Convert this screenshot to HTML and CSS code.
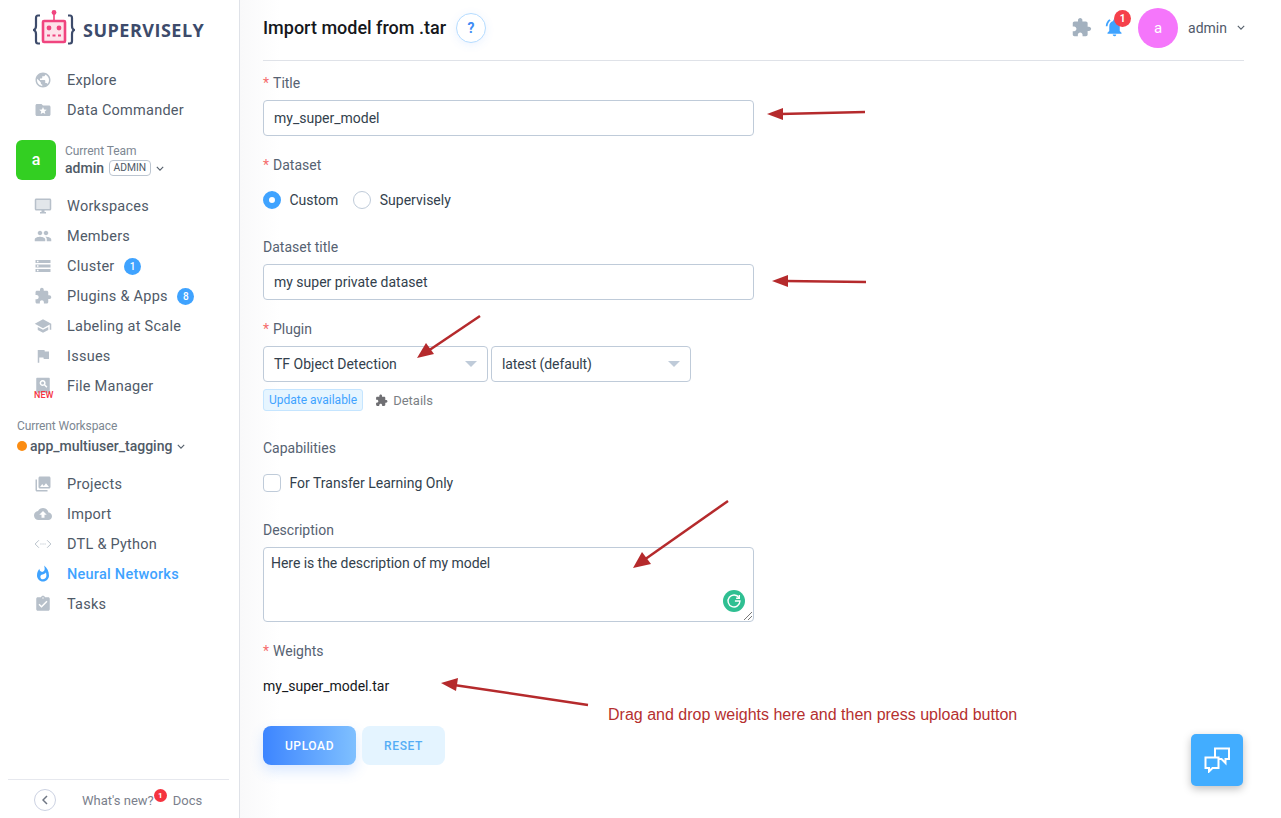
FILE: index.html
```html
<!DOCTYPE html>
<html lang="en">
<head>
    <meta charset="UTF-8">
    <meta name="viewport" content="width=device-width, initial-scale=1.0">
    <title>Import model from .tar</title>
    <link rel="stylesheet" href="styles.css">
</head>
<body>

<div class="app">
    <aside class="sidebar">
        <div class="logo">
            <svg class="logo-mark" viewBox="0 0 42 36">
                <path d="M7 5.500H5Q3 5.500 3 8V16Q3 19 .800 20Q3 21 3 24V31Q3 33.500 5 33.500H7" fill="none" stroke="#3d4b6b" stroke-width="2.200"/>
                <path d="M35 5.500H37Q39 5.500 39 8V16Q39 19 41.200 20Q39 21 39 24V31Q39 33.500 37 33.500H35" fill="none" stroke="#3d4b6b" stroke-width="2.200"/>
                <circle cx="21" cy="2.500" r="2.400" fill="#f0457f"/>
                <path d="M21 3V10" stroke="#f0457f" stroke-width="1.600"/>
                <rect x="10" y="11" width="22" height="21" rx="1" fill="#fde3ea" stroke="#f0457f" stroke-width="2.600"/>
                <circle cx="16" cy="18" r="2.400" fill="#f0457f"/>
                <circle cx="26" cy="18" r="2.400" fill="#f0457f"/>
                <path d="M14 25.500H28" stroke="#f0457f" stroke-width="1.800" stroke-dasharray="3 2.500"/>
            </svg>
            <span class="logo-text">SUPERVISELY</span>
        </div>

        <nav class="nav">
            <a class="nav-item"><svg class="nav-icon" viewBox="0 0 24 24"><path d="M12 2C6.480 2 2 6.480 2 12s4.480 10 10 10 10-4.480 10-10S17.520 2 12 2zm-1 17.930c-3.950-.490-7-3.850-7-7.930 0-.620.080-1.210.210-1.790L9 15v1c0 1.100.900 2 2 2v1.930zm6.900-2.540c-.260-.810-1-1.390-1.900-1.390h-1v-3c0-.550-.450-1-1-1H8v-2h2c.550 0 1-.450 1-1V7h2c1.100 0 2-.900 2-2v-.410c2.930 1.190 5 4.060 5 7.410 0 2.080-.800 3.970-2.100 5.390z"/></svg>Explore</a>
            <a class="nav-item"><svg class="nav-icon" viewBox="0 0 24 24"><path fill-rule="evenodd" d="M20 6h-8l-2-2H4c-1.100 0-2 .900-2 2v12c0 1.100.900 2 2 2h16c1.100 0 2-.900 2-2V8c0-1.100-.900-2-2-2zM12 8l1.400 3.300 3.600.300-2.700 2.300.800 3.500L12 15.600l-3.100 1.800.800-3.500L7 11.600l3.600-.300z"/></svg>Data Commander</a>
        </nav>

        <div class="team">
            <div class="team-avatar">a</div>
            <div class="team-info">
                <div class="team-caption">Current Team</div>
                <div class="team-name">admin <span class="role">ADMIN</span>
                    <svg class="chevron" viewBox="0 0 10 6"><path d="M1 1l4 4 4-4"/></svg>
                </div>
            </div>
        </div>

        <nav class="nav nav-team">
            <a class="nav-item"><svg class="nav-icon" viewBox="0 0 24 24"><rect x="2" y="3" width="20" height="14" opacity=".4"/><path d="M21 2H3c-1.100 0-2 .900-2 2v12c0 1.100.900 2 2 2h7v2H8v2h8v-2h-2v-2h7c1.100 0 2-.900 2-2V4c0-1.100-.900-2-2-2zm0 14H3V4h18v12z"/></svg>Workspaces</a>
            <a class="nav-item"><svg class="nav-icon" viewBox="0 0 24 24"><path d="M16 11c1.660 0 2.990-1.340 2.990-3S17.660 5 16 5c-1.660 0-3 1.340-3 3s1.340 3 3 3zm-8 0c1.660 0 2.990-1.340 2.990-3S9.660 5 8 5C6.340 5 5 6.340 5 8s1.340 3 3 3zm0 2c-2.330 0-7 1.170-7 3.500V19h14v-2.500c0-2.330-4.670-3.500-7-3.500zm8 0c-.290 0-.620.020-.970.050 1.160.840 1.970 1.970 1.970 3.450V19h6v-2.500c0-2.330-4.670-3.500-7-3.500z"/></svg>Members</a>
            <a class="nav-item"><svg class="nav-icon" viewBox="0 0 24 24"><path d="M2 20h20v-4H2v4zm2-3h2v2H4v-2zM2 4v4h20V4H2zm4 3H4V5h2v2zm-4 7h20v-4H2v4zm2-3h2v2H4v-2z"/></svg>Cluster<span class="count">1</span></a>
            <a class="nav-item"><svg class="nav-icon" viewBox="0 0 24 24"><path d="M20.500 11H19V7c0-1.100-.900-2-2-2h-4V3.500C13 2.120 11.880 1 10.500 1S8 2.120 8 3.500V5H4c-1.100 0-1.990.900-1.990 2v3.800H3.500c1.490 0 2.700 1.210 2.700 2.700s-1.210 2.700-2.700 2.700H2V20c0 1.100.900 2 2 2h3.800v-1.500c0-1.490 1.210-2.700 2.700-2.700 1.490 0 2.700 1.210 2.700 2.700V22H17c1.100 0 2-.900 2-2v-4h1.500c1.380 0 2.500-1.120 2.500-2.500S21.880 11 20.500 11z"/></svg>Plugins &amp; Apps<span class="count">8</span></a>
            <a class="nav-item"><svg class="nav-icon" viewBox="0 0 24 24"><path d="M5 13.180v4L12 21l7-3.820v-4L12 17l-7-3.820zM12 3L1 9l11 6 9-4.910V17h2V9L12 3z"/></svg>Labeling at Scale</a>
            <a class="nav-item"><svg class="nav-icon" viewBox="0 0 24 24"><path d="M14.400 6L14 4H5v17h2v-7h5.600l.400 2h7V6z"/></svg>Issues</a>
            <a class="nav-item"><span class="file-icon"><svg class="nav-icon" viewBox="0 0 24 24"><path fill-rule="evenodd" d="M4 1h16c.600 0 1 .400 1 1v18c0 .600-.400 1-1 1H4c-.600 0-1-.400-1-1V2c0-.600.400-1 1-1zm7.500 3a4 4 0 1 0 2.100 7.400l2.900 2.900 1.400-1.400-2.900-2.900A4 4 0 0 0 11.500 4zm0 2a2 2 0 1 1 0 4 2 2 0 0 1 0-4z"/></svg><span class="new-tag">NEW</span></span>File Manager</a>
        </nav>

        <div class="workspace">
            <div class="workspace-caption">Current Workspace</div>
            <div class="workspace-name"><span class="dot"></span>app_multiuser_tagging
                <svg class="chevron" viewBox="0 0 10 6"><path d="M1 1l4 4 4-4"/></svg>
            </div>
        </div>

        <nav class="nav">
            <a class="nav-item"><svg class="nav-icon" viewBox="0 0 24 24"><path d="M22 16V4c0-1.100-.900-2-2-2H8c-1.100 0-2 .900-2 2v12c0 1.100.900 2 2 2h12c1.100 0 2-.900 2-2zm-11-4l2.030 2.710L16 11l4 5H8l3-4zM2 6v14c0 1.100.900 2 2 2h14v-2H4V6H2z"/></svg>Projects</a>
            <a class="nav-item"><svg class="nav-icon" viewBox="0 0 24 24"><path d="M19.350 10.040C18.670 6.590 15.640 4 12 4 9.110 4 6.600 5.640 5.350 8.040 2.340 8.360 0 10.910 0 14c0 3.310 2.690 6 6 6h13c2.760 0 5-2.240 5-5 0-2.640-2.050-4.780-4.650-4.960zM14 13v4h-4v-4H7l5-5 5 5h-3z"/></svg>Import</a>
            <a class="nav-item"><svg class="nav-icon nav-icon-line" viewBox="0 0 24 24"><path d="M6.500 7L1.500 12l5 5M17.500 7l5 5-5 5"/><path class="dots" d="M8.500 12h7"/></svg>DTL &amp; Python</a>
            <a class="nav-item active"><svg class="nav-icon" viewBox="0 0 24 24"><path d="M13.500.670s.740 2.650.740 4.800c0 2.060-1.350 3.730-3.410 3.730-2.070 0-3.630-1.670-3.630-3.730l.030-.360C5.210 7.510 4 10.620 4 14c0 4.420 3.580 8 8 8s8-3.580 8-8C20 8.610 17.410 3.800 13.500.670zM11.710 19c-1.780 0-3.220-1.400-3.220-3.140 0-1.620 1.050-2.760 2.810-3.120 1.770-.360 3.600-1.210 4.620-2.580.390 1.290.590 2.650.590 4.040 0 2.650-2.150 4.800-4.800 4.800z"/></svg>Neural Networks</a>
            <a class="nav-item"><svg class="nav-icon" viewBox="0 0 24 24"><path d="M19 3h-4.180C14.400 1.840 13.300 1 12 1c-1.300 0-2.400.840-2.820 2H5c-1.100 0-2 .900-2 2v14c0 1.100.900 2 2 2h14c1.100 0 2-.900 2-2V5c0-1.100-.900-2-2-2zm-7 0c.550 0 1 .450 1 1s-.450 1-1 1-1-.450-1-1 .450-1 1-1zm-2 14l-4-4 1.410-1.410L10 14.170l6.590-6.590L18 9l-8 8z"/></svg>Tasks</a>
        </nav>

        <div class="sidebar-footer">
            <span class="collapse"><svg viewBox="0 0 6 10"><path d="M5 1L1 5l4 4"/></svg></span>
            <a class="whats-new">What's new?<span class="mini-badge">1</span></a>
            <a class="docs">Docs</a>
        </div>
    </aside>

    <main class="main">
        <header class="topbar">
            <h1>Import model from .tar</h1>
            <span class="help">?</span>
            <div class="topbar-right">
                <svg class="top-puzzle" viewBox="0 0 24 24"><path d="M20.500 11H19V7c0-1.100-.900-2-2-2h-4V3.500C13 2.120 11.880 1 10.500 1S8 2.120 8 3.500V5H4c-1.100 0-1.990.900-1.990 2v3.800H3.500c1.490 0 2.700 1.210 2.700 2.700s-1.210 2.700-2.700 2.700H2V20c0 1.100.900 2 2 2h3.800v-1.500c0-1.490 1.210-2.700 2.700-2.700 1.490 0 2.700 1.210 2.700 2.700V22H17c1.100 0 2-.900 2-2v-4h1.500c1.380 0 2.500-1.120 2.500-2.500S21.880 11 20.500 11z"/></svg>
                <span class="bell">
                    <svg viewBox="0 0 24 24"><path d="M7.580 4.080L6.150 2.650C3.750 4.480 2.170 7.300 2.030 10.500h2c.150-2.650 1.510-4.970 3.550-6.420zm12.390 6.420h2c-.150-3.200-1.730-6.020-4.120-7.850l-1.420 1.430c2.020 1.450 3.390 3.770 3.540 6.420zM18 11c0-3.070-1.640-5.640-4.500-6.320V4c0-.830-.670-1.500-1.500-1.500s-1.500.670-1.500 1.500v.680C7.630 5.360 6 7.920 6 11v5l-2 2v1h16v-1l-2-2v-5zm-6 11c.140 0 .270-.010.400-.040.650-.140 1.180-.580 1.440-1.180.100-.240.150-.500.150-.780h-4c.010 1.100.900 2 2.010 2z"/></svg>
                    <span class="bell-badge">1</span>
                </span>
                <span class="user-avatar">a</span>
                <span class="user-name">admin</span>
                <svg class="chevron" viewBox="0 0 10 6"><path d="M1 1l4 4 4-4"/></svg>
            </div>
        </header>

        <form class="form">
            <div class="field">
                <label class="label required">Title</label>
                <div class="input">my_super_model</div>
            </div>
            <div class="field">
                <label class="label required">Dataset</label>
                <div class="choice-row">
                    <span class="radio checked"></span><span class="choice-text">Custom</span>
                    <span class="radio"></span><span class="choice-text">Supervisely</span>
                </div>
            </div>
            <div class="field">
                <label class="label">Dataset title</label>
                <div class="input">my super private dataset</div>
            </div>
            <div class="field">
                <label class="label required">Plugin</label>
                <div class="select-row">
                    <div class="select select-plugin">TF Object Detection<span class="caret"></span></div>
                    <div class="select select-version">latest (default)<span class="caret"></span></div>
                </div>
                <div class="plugin-meta">
                    <span class="tag">Update available</span>
                    <svg class="details-icon" viewBox="0 0 24 24"><path d="M20.500 11H19V7c0-1.100-.900-2-2-2h-4V3.500C13 2.120 11.880 1 10.500 1S8 2.120 8 3.500V5H4c-1.100 0-1.990.900-1.990 2v3.800H3.500c1.490 0 2.700 1.210 2.700 2.700s-1.210 2.700-2.700 2.700H2V20c0 1.100.900 2 2 2h3.800v-1.500c0-1.490 1.210-2.700 2.700-2.700 1.490 0 2.700 1.210 2.700 2.700V22H17c1.100 0 2-.900 2-2v-4h1.500c1.380 0 2.500-1.120 2.500-2.500S21.880 11 20.500 11z"/></svg>
                    <span class="details">Details</span>
                </div>
            </div>
            <div class="field field-capabilities">
                <label class="label">Capabilities</label>
                <div class="choice-row">
                    <span class="checkbox"></span><span class="choice-text">For Transfer Learning Only</span>
                </div>
            </div>
            <div class="field">
                <label class="label">Description</label>
                <div class="textarea">Here is the description of my model
                    <span class="grammarly"><svg viewBox="0 0 24 24"><path d="M17.500 8.500A6.500 6.500 0 1 0 18.500 12H13"/><path d="M17.800 5.500v3.500h-3.500"/></svg></span>
                    <svg class="resize-grip" viewBox="0 0 8 8"><path d="M0 8L8 0M4 8l4-4"/></svg>
                </div>
            </div>
            <div class="field">
                <label class="label required">Weights</label>
                <div class="file-name">my_super_model.tar</div>
            </div>
            <div class="actions">
                <button type="button" class="btn btn-upload">UPLOAD</button>
                <button type="button" class="btn btn-reset">RESET</button>
            </div>
        </form>
    </main>
</div>

<!-- annotations drawn on top of the screenshot -->
<svg class="annotations" viewBox="0 0 1281 818">
    <g class="arrow-line">
        <path d="M865 112L780 114"/>
        <path d="M866 282L785 281"/>
        <path d="M480 316L428 351"/>
        <path d="M728 501L644 560"/>
        <path d="M588 705L454 685"/>
    </g>
    <g class="arrow-head">
        <path d="M767 114L783 108L783 120Z"/>
        <path d="M772 281L788 275L788 287Z"/>
        <path d="M417 358L426 343L434 354Z"/>
        <path d="M633 568L642 552L651 564Z"/>
        <path d="M441 683L458 678L456 691Z"/>
    </g>
</svg>
<div class="annotation-text">Drag and drop weights here and then press upload button</div>

<button type="button" class="chat">
    <svg viewBox="0 0 26 26"><path d="M11 10V1.500h14V12h-3.500v4l-4-4H15"/><path d="M1.500 10.500h13V21H8.500L5 24.500V21H1.500z"/></svg>
</button>

</body>
</html>
```

FILE: styles.css
```css
* {
    box-sizing: border-box;
}
html, body {
    height: 100%;
}
body {
    font-family: Roboto, "Liberation Sans", sans-serif;
    font-size: 14px;
    color: #333f4d;
    background-color: #fff;
    margin: 0;
    overflow: hidden;
}
.app {
    display: flex;
    height: 818px;
}

/* sidebar */
.sidebar {
    width: 240px;
    flex-shrink: 0;
    display: flex;
    flex-direction: column;
    background-color: #fff;
    border-right: 1px solid #dfe2e8;
}
.logo {
    height: 65px;
    padding: 10px 0 0 33px;
    display: flex;
    align-items: flex-start;
}
.logo-mark {
    width: 42px;
    height: 36px;
}
.logo-text {
    margin-left: 8px;
    margin-top: 9px;
    font-family: "Open Sans", sans-serif;
    font-weight: 700;
    font-size: 18px;
    line-height: 22px;
    letter-spacing: .5px;
    color: #3d4b6b;
}
.nav-team {
    margin-top: 11px;
}
.nav-item {
    display: flex;
    align-items: center;
    height: 30px;
    padding-left: 34px;
    font-size: 14.500px;
    letter-spacing: .25px;
    color: #4f5a68;
}
.nav-icon {
    width: 18px;
    height: 18px;
    margin-right: 15px;
    flex-shrink: 0;
    fill: #b7c0ca;
}
.nav-icon-line {
    fill: none;
    stroke: #b7c0ca;
    stroke-width: 1.300;
}
.nav-icon-line .dots {
    stroke-dasharray: 1.500 1.300;
}
.nav-item.active {
    color: #3fa3ff;
    font-weight: 500;
}
.nav-item.active .nav-icon {
    fill: #3fa3ff;
}
.count {
    display: inline-block;
    width: 17px;
    height: 17px;
    margin-left: 9.500px;
    border-radius: 50%;
    background-color: #3fa3ff;
    color: white;
    font-size: 10px;
    font-weight: 500;
    line-height: 17px;
    text-align: center;
    letter-spacing: 0;
}
.file-icon {
    position: relative;
    display: flex;
}
.new-tag {
    position: absolute;
    left: 0;
    top: 14px;
    color: #f5333f;
    font-size: 9px;
    font-weight: 500;
    line-height: 9px;
    letter-spacing: 0;
}
.team {
    display: flex;
    margin: 15px 0 0 16px;
}
.team-avatar {
    width: 40px;
    height: 40px;
    border-radius: 6px;
    background-color: #33cf22;
    color: white;
    font-size: 16px;
    font-weight: 500;
    line-height: 40px;
    text-align: center;
}
.team-info {
    margin-left: 9px;
}
.team-caption {
    font-size: 12px;
    line-height: 16px;
    margin-top: 3px;
    letter-spacing: -.05px;
    color: #7d8792;
}
.team-name {
    display: flex;
    align-items: center;
    margin-top: -1px;
    font-size: 14px;
    font-weight: 500;
    line-height: 20px;
    color: #505a66;
}
.role {
    margin-left: 5px;
    padding: 0 3.500px;
    height: 16px;
    border: 1px solid #bcc5d0;
    border-radius: 4px;
    font-size: 10.300px;
    font-weight: 400;
    line-height: 14px;
}
.chevron {
    width: 8px;
    height: 5px;
    margin-left: 5px;
    fill: none;
    stroke: #555f6b;
    stroke-width: 1.400;
}
.workspace {
    margin: 17px 0 13px 17px;
}
.workspace-caption {
    font-size: 12px;
    line-height: 16px;
    letter-spacing: -.1px;
    color: #7d8792;
}
.workspace-name {
    display: flex;
    align-items: center;
    margin-top: 2px;
    font-size: 14px;
    font-weight: 500;
    line-height: 20px;
    color: #505a66;
}
.dot {
    width: 10px;
    height: 10px;
    margin-right: 3px;
    border-radius: 50%;
    background-color: #fb8c12;
}
.sidebar-footer {
    margin: auto 10px 0 8px;
    height: 39px;
    padding-top: 2px;
    border-top: 1px solid #e6e8ee;
    display: flex;
    align-items: center;
    font-size: 13px;
    color: #7b7f8c;
}
.collapse {
    display: flex;
    align-items: center;
    justify-content: center;
    width: 22px;
    height: 22px;
    margin-left: 26px;
    border: 1px solid #ccd2e2;
    border-radius: 50%;
}
.collapse svg {
    width: 6px;
    height: 10px;
    fill: none;
    stroke: #6f7683;
    stroke-width: 1.500;
}
.whats-new {
    position: relative;
    margin-left: 26px;
}
.mini-badge {
    position: absolute;
    top: -4px;
    right: -13px;
    width: 13px;
    height: 13px;
    border-radius: 50%;
    background-color: #f5333f;
    color: white;
    font-size: 8px;
    font-weight: 700;
    line-height: 13px;
    text-align: center;
}
.docs {
    margin-left: 19px;
}

/* main column */
.main {
    flex: 1;
    padding: 0 37px 0 23px;
    background: linear-gradient(90deg, #f9f9fa 0, #fff 40px);
}
.topbar {
    display: flex;
    align-items: center;
    height: 61px;
    padding-bottom: 5px;
    border-bottom: 1px solid #dfe2e8;
}
h1 {
    margin: 0;
    font-size: 18px;
    font-weight: 500;
    color: #15181c;
}
.help {
    width: 30px;
    height: 30px;
    margin-left: 10px;
    border: 1px solid #b5dcff;
    border-radius: 50%;
    background-color: #fff;
    box-shadow: 0 2px 10px rgba(64, 140, 255, .1);
    color: #3d8bf5;
    font-size: 14px;
    font-weight: 700;
    line-height: 28px;
    text-align: center;
}
.topbar-right {
    margin-left: auto;
    display: flex;
    align-items: center;
}
.top-puzzle {
    width: 21px;
    height: 21px;
    fill: #a3b1bf;
}
.bell {
    position: relative;
    display: flex;
    margin-left: 12px;
}
.bell svg {
    width: 21px;
    height: 21px;
    fill: #3fa3ff;
}
.bell-badge {
    position: absolute;
    top: -7px;
    right: -6px;
    width: 17px;
    height: 17px;
    border-radius: 50%;
    background-color: #f5404a;
    color: white;
    font-size: 10px;
    font-weight: 700;
    line-height: 17px;
    text-align: center;
}
.user-avatar {
    width: 40px;
    height: 40px;
    margin-left: 13px;
    border-radius: 50%;
    background-color: #f576fb;
    color: white;
    font-size: 15px;
    line-height: 40px;
    text-align: center;
}
.user-name {
    margin-left: 10px;
    font-size: 14px;
    color: #505a6b;
}
.topbar-right .chevron {
    margin-left: 10px;
    margin-right: -1px;
}

/* form */
.form {
    padding-top: 12px;
}
.field {
    margin-bottom: 19px;
}
.label {
    display: block;
    height: 20px;
    margin-bottom: 7px;
    line-height: 20px;
    color: #566272;
}
.required::before {
    content: "*";
    margin-right: 4px;
    color: #f56c6c;
}
.input {
    width: 491px;
    height: 36px;
    padding: 0 10px;
    border: 1px solid #bfcbd9;
    border-radius: 4px;
    background-color: #fff;
    line-height: 34px;
    color: #333f4d;
}
.choice-row {
    display: flex;
    align-items: center;
    height: 36px;
}
.choice-text {
    margin-left: 8.500px;
    margin-right: 15px;
}
.radio {
    width: 18px;
    height: 18px;
    border: 1px solid #bfcbd9;
    border-radius: 50%;
    background-color: #fff;
}
.radio.checked {
    border: 6px solid #3fa3ff;
}
.checkbox {
    width: 18px;
    height: 18px;
    border: 1px solid #bfcbd9;
    border-radius: 4px;
    background-color: #fff;
}
.select-row {
    display: flex;
    gap: 3px;
}
.select {
    position: relative;
    height: 36px;
    padding: 0 10px;
    border: 1px solid #bfcbd9;
    border-radius: 4px;
    background-color: #fff;
    line-height: 34px;
}
.select-plugin {
    width: 225px;
}
.select-version {
    width: 200px;
    letter-spacing: -.1px;
}
.caret {
    position: absolute;
    right: 10px;
    top: 14px;
    border-left: 6px solid transparent;
    border-right: 6px solid transparent;
    border-top: 6px solid #bfcbd9;
}
.plugin-meta {
    display: flex;
    align-items: center;
    margin-top: 7px;
    height: 22px;
}
.tag {
    height: 22px;
    padding: 0 5px;
    border: 1px solid #c5e5ff;
    border-radius: 3px;
    background-color: #e6f5ff;
    color: #3fa3ff;
    font-size: 12px;
    line-height: 21px;
}
.details-icon {
    width: 13px;
    height: 13px;
    margin-left: 12px;
    fill: #6f6f73;
}
.details {
    margin-left: 5px;
    font-size: 13px;
    color: #7b7f85;
}
.field-capabilities {
    margin-top: 27px;
}
.textarea {
    position: relative;
    width: 491px;
    height: 75px;
    padding: 5px 7px;
    border: 1px solid #bfcbd9;
    border-radius: 4px;
    background-color: #fff;
    line-height: 20px;
    letter-spacing: -.05px;
}
.grammarly {
    position: absolute;
    right: 8px;
    bottom: 9px;
    width: 22px;
    height: 22px;
    border-radius: 50%;
    background-color: #2fbf92;
}
.grammarly svg {
    display: block;
    width: 22px;
    height: 22px;
    fill: none;
    stroke: white;
    stroke-width: 1.500;
}
.resize-grip {
    position: absolute;
    right: 1px;
    bottom: 1px;
    width: 8px;
    height: 8px;
    fill: none;
    stroke: #555;
    stroke-width: .8;
}
.file-name {
    height: 36px;
    line-height: 36px;
    color: #15181c;
}
.actions {
    display: flex;
    gap: 6px;
    margin-top: 22px;
}
.btn {
    height: 39px;
    border: none;
    border-radius: 8px;
    font-family: Roboto, sans-serif;
    font-size: 12px;
    font-weight: 500;
    letter-spacing: .6px;
}
.btn-upload {
    width: 93px;
    background: linear-gradient(90deg, #3d85ff, #7fc0ff);
    box-shadow: 0 6px 14px rgba(64, 140, 255, .2);
    color: white;
}
.btn-reset {
    width: 83px;
    background-color: #e4f4ff;
    color: #55adf5;
}

/* things lying over the page */
.annotations {
    position: absolute;
    left: 0;
    top: 0;
    width: 1281px;
    height: 818px;
    pointer-events: none;
}
.arrow-line path {
    fill: none;
    stroke: #b52a2c;
    stroke-width: 2.500;
}
.arrow-head path {
    fill: #b52a2c;
}
.annotation-text {
    position: absolute;
    left: 608px;
    top: 705px;
    font-family: "Liberation Sans", sans-serif;
    font-size: 16px;
    line-height: 20px;
    color: #b5302f;
}
.chat {
    position: absolute;
    left: 1191px;
    top: 734px;
    width: 52px;
    height: 52px;
    padding: 13px;
    border: none;
    border-radius: 5px;
    background-color: #42adff;
    box-shadow: 0 3px 8px rgba(0, 0, 0, .25);
}
.chat svg {
    display: block;
    width: 26px;
    height: 26px;
    fill: none;
    stroke: white;
    stroke-width: 2;
}
```
